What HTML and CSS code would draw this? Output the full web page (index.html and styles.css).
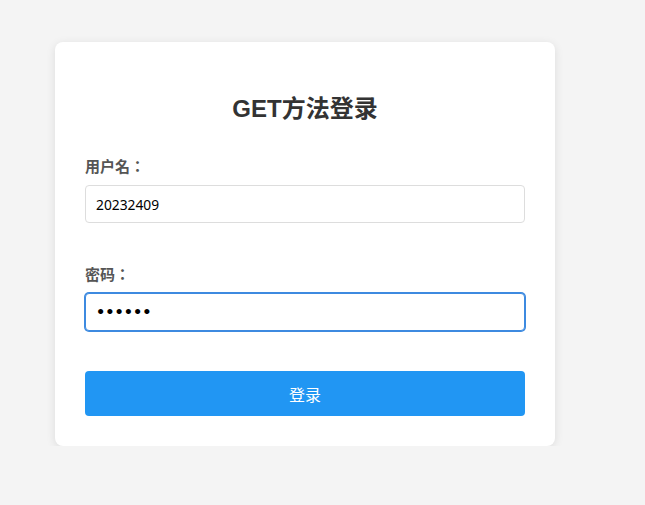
FILE: index.html
```html
<!DOCTYPE html>
<html lang="en">
<head>
  <meta charset="UTF-8">
  <meta name="viewport" content="width=device-width, initial-scale=1.0">
  <title>GET方法登录</title>
  <link rel="stylesheet" href="styles.css">
</head>
<body>
  <div class="login-box">
    <h2>GET方法登录</h2>
    <form action="#" method="get">
      <div class="form-group">
        <label for="username">用户名：</label>
        <input type="text" id="username" name="username" value="20232409">
      </div>
      <div class="form-group">
        <label for="password">密码：</label>
        <input type="password" id="password" name="password" class="focused" value="123456">
      </div>
      <button type="submit" class="login-btn">登录</button>
    </form>
  </div>
</body>
</html>
```

FILE: styles.css
```css
body {
  margin: 0;
  padding: 42px 0 0 55px;
  background-color: #f4f4f4;
  font-family: "Liberation Sans", Arial, "Noto Sans CJK SC", sans-serif;
}

.login-box {
  width: 500px;
  box-sizing: border-box;
  background-color: #fff;
  border-radius: 8px;
  padding: 30px;
  box-shadow: 0 2px 10px rgba(0, 0, 0, 0.1);
}

.login-box h2 {
  margin: 22px 0 32px;
  text-align: center;
  font-size: 24px;
  line-height: 30px;
  color: #333;
}

.form-group {
  margin-bottom: 41px;
}

.form-group label {
  display: block;
  font-family: "Noto Sans CJK JP", "Noto Sans CJK SC", sans-serif;
  font-size: 15px;
  font-weight: bold;
  line-height: 20px;
  color: #555;
  margin-bottom: 9px;
}

.form-group input {
  display: block;
  width: 100%;
  height: 38px;
  box-sizing: border-box;
  padding: 0 10px;
  border: 1px solid #ddd;
  border-radius: 4px;
  font-family: "Noto Sans", "Noto Sans CJK SC", sans-serif;
  font-size: 13.8px;
  color: #000;
  outline: none;
}

.form-group input[type="password"] {
  font-family: "DejaVu Sans", sans-serif;
  font-size: 14.5px;
  font-weight: bold;
}

.form-group input.focused {
  border-color: #3d8ae0;
  box-shadow: 0 0 0 1px #3d8ae0;
}

.login-btn {
  display: block;
  width: 100%;
  height: 45px;
  margin-top: -1px;
  border: none;
  border-radius: 4px;
  background-color: #2196f3;
  color: #fff;
  font-family: "Noto Sans CJK SC", sans-serif;
  font-size: 16px;
  cursor: pointer;
}
```
